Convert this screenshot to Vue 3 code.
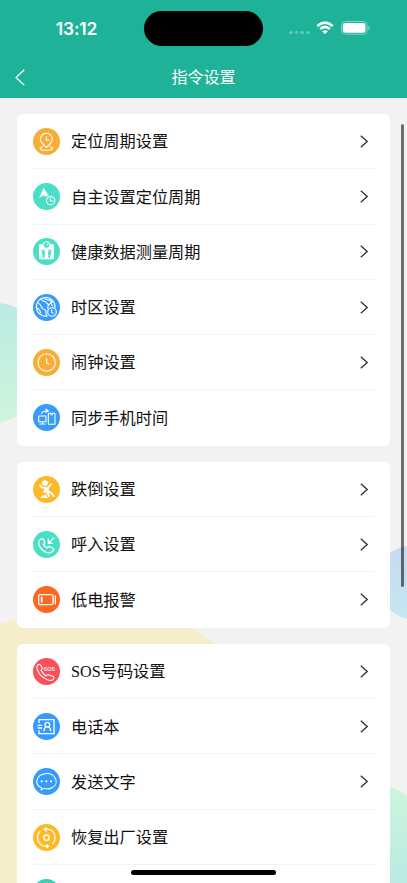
<script setup>
const groups = [
  [
    { icon: 'pin', color: '#f7ad36', label: '定位周期设置', arrow: true },
    { icon: 'navigate', color: '#48dfc5', label: '自主设置定位周期', arrow: true },
    { icon: 'scale', color: '#48dfc5', label: '健康数据测量周期', arrow: true },
    { icon: 'globe', color: '#369bfb', label: '时区设置', arrow: true },
    { icon: 'clock', color: '#f7ad36', label: '闹钟设置', arrow: true },
    { icon: 'sync', color: '#369bfb', label: '同步手机时间', arrow: false }
  ],
  [
    { icon: 'fall', color: '#feb92b', label: '跌倒设置', arrow: true },
    { icon: 'incoming', color: '#48dfc5', label: '呼入设置', arrow: true },
    { icon: 'battery', color: '#ff661f', label: '低电报警', arrow: true }
  ],
  [
    { icon: 'sos', color: '#fb5059', label: 'SOS号码设置', arrow: true },
    { icon: 'contacts', color: '#369bfb', label: '电话本', arrow: true },
    { icon: 'message', color: '#369bfb', label: '发送文字', arrow: true },
    { icon: 'reset', color: '#feb92b', label: '恢复出厂设置', arrow: false },
    { icon: 'more', color: '#33d3b0', label: '', arrow: false }
  ]
]
</script>

<template>
  <div class="screen">
    <svg class="backdrop" viewBox="0 0 407 883">
      <defs>
        <linearGradient id="mint" x1="0" y1="0" x2="0" y2="1">
          <stop offset="0" stop-color="#b9ebe3" />
          <stop offset="1" stop-color="#cff5dc" />
        </linearGradient>
        <linearGradient id="sky" x1="0" y1="0" x2="0" y2="1">
          <stop offset="0" stop-color="#c7daf0" />
          <stop offset="1" stop-color="#c5e7f1" />
        </linearGradient>
        <linearGradient id="leaf" x1="0" y1="0" x2="0" y2="1">
          <stop offset="0" stop-color="#cff5dc" />
          <stop offset="1" stop-color="#b9ebe3" />
        </linearGradient>
      </defs>
      <path d="M0 303Q9 304 17 308L50 340L17 416Q9 421 0 423Z" fill="url(#mint)" />
      <path d="M0 624Q35 612 90 612Q160 615 190 628Q202 634 214 643L240 665V883H0Z" fill="#f6edca" />
      <path d="M380 563Q390 549 407 546V619Q397 616 390 610L380 600Z" fill="url(#sky)" />
      <path d="M380 782L390 786Q399 790 407 796V883H380Z" fill="url(#leaf)" />
    </svg>

    <header class="header">
      <div class="status">
        <span class="time">13:12</span>
        <span class="island"></span>
        <div class="signals">
          <span class="cell"><i></i><i></i><i></i><i></i></span>
          <svg class="wifi" viewBox="0 0 54 42">
            <path d="M4 15Q27-5 50 15M12.500 24Q27 11 41.500 24" fill="none" stroke="#fff" stroke-width="7.500" />
            <path d="M18.500 31Q27 24 35.500 31L27 40Z" fill="#fff" />
          </svg>
          <svg class="power" viewBox="0 0 87 42">
            <rect x="1.500" y="1.500" width="77" height="38" rx="12" fill="none" stroke="#fff" stroke-opacity=".45" stroke-width="3" />
            <rect x="5.500" y="6" width="68" height="29" rx="8" fill="#fff" />
            <path d="M82 14Q86 16 86 21T82 28Z" fill="#fff" fill-opacity=".5" />
          </svg>
        </div>
      </div>
      <div class="navbar">
        <svg class="back" viewBox="0 0 10 17"><path d="M9.300 .7L1 8.500L9.300 16.300" /></svg>
        <h1>指令设置</h1>
        <span class="nav-space"></span>
      </div>
    </header>

    <main class="content">
      <section v-for="(group, index) in groups" :key="index" class="card">
        <div v-for="item in group" :key="item.icon" class="row">
          <svg class="icon" viewBox="0 0 81 81">
            <circle cx="40.500" cy="40.500" r="40.500" :fill="item.color" />
            <g v-if="item.icon === 'pin'" class="line">
              <path d="M40 59C35 52 22 45 22 34A18 18 0 0 1 58 34C58 45 45 52 40 59Z" />
              <path d="M40 26V37H49" />
              <path d="M29 56C16 59 19 67 40 67S64 59 51 56" />
            </g>
            <g v-else-if="item.icon === 'navigate'" class="line">
              <path d="M32 14L48 40Q42 38 39 42L32 37L18 46Z" class="solid" />
              <circle cx="53" cy="53" r="12.500" /><path d="M52 46V54H60" />
            </g>
            <g v-else-if="item.icon === 'scale'">
              <rect x="18" y="19" width="45" height="45" rx="3" fill="#fff" />
              <circle cx="40.500" cy="21" r="10" :fill="item.color" stroke="#fff" stroke-width="3" />
              <path d="M41 23L45 16" stroke="#fff" stroke-width="3" />
              <g :fill="item.color">
                <path d="M25 37Q34 31 36 39C38 45 34 47 35 53Q36 59 32 60Q27 60 29 54C29 48 24 45 25 37Z" />
                <path d="M56 37Q47 31 45 39C43 45 47 47 46 53Q45 59 49 60Q54 60 52 54C52 48 57 45 56 37Z" />
              </g>
              <path d="M25 41Q31 36 36 42M45 42Q50 36 56 41" fill="none" stroke="#fff" stroke-width="1.500" />
            </g>
            <g v-else-if="item.icon === 'globe'" class="line">
              <path d="M43 66A28 28 0 1 1 66 41" />
              <path d="M15 27Q22 29 25 38T38 48L40 65M12 42Q20 44 23 57M25 16Q29 23 36 22L46 32L44 43M35 13Q43 20 51 18Q58 23 51 28L47 34M59 21L54 28L59 36" />
              <circle cx="57" cy="54" r="13" /><path d="M56 47V55L61 58" />
            </g>
            <g v-else-if="item.icon === 'clock'" class="line">
              <circle cx="41" cy="40.500" r="26" /><path d="M41 28V42L48 46" />
            </g>
            <g v-else-if="item.icon === 'sync'" class="line">
              <rect x="17" y="36" width="22" height="17" /><path d="M28 53V60M20 60H37" />
              <rect x="46" y="28" width="20" height="33" rx="2" /><path d="M53 32H59" />
              <path d="M26 28Q28 21 42 21" /><path d="M38 13L49 21L38 28Z" class="solid" />
            </g>
            <g v-else-if="item.icon === 'fall'">
              <circle cx="36" cy="21" r="8.500" fill="#fff" />
              <path d="M36 35L26 34L21 28M43 37L54 25M44 46L54 50L62 60M43 49L48 61" fill="none" stroke="#fff" stroke-width="5.500" stroke-linecap="round" stroke-linejoin="round" />
              <path d="M33 32L48 37L47 47L44 51L29 49L34 41Z" fill="#fff" />
              <path d="M22 66L29 57L33 60L37 54L45 66Z" fill="#fff" />
            </g>
            <g v-else-if="item.icon === 'incoming'" class="line bold">
              <path d="M24 24Q29 21 32 27L35 34Q36 38 31 40Q34 47 43 51Q46 45 50 47L59 51Q64 54 60 60Q53 68 40 64C26 59 17 45 17 35Q17 27 24 24Z" />
              <path d="M62 21L47 36M46 24V37H59" />
            </g>
            <g v-else-if="item.icon === 'battery'" class="line bold">
              <rect x="17" y="26" width="43" height="30" rx="4" /><path d="M26 34V48" stroke-width="5" /><path d="M67 30V53" />
            </g>
            <g v-else-if="item.icon === 'sos'" class="line">
              <path d="M15 20Q20 17 24 23L28 31Q28 34 24 36Q29 47 39 54Q44 48 48 51L59 55Q65 58 61 64Q54 70 43 65C27 59 16 46 12 32Q10 24 15 20Z" />
              <text x="32" y="39" class="sos-text" textLength="34" lengthAdjust="spacingAndGlyphs">SOS</text>
            </g>
            <g v-else-if="item.icon === 'contacts'" class="line bold">
              <path d="M18 29V20H63V62H18V53M15 37H26M15 45H26" />
              <circle cx="43" cy="35" r="7" /><path d="M33 53Q33 44 40 42M46 42Q53 44 53 53" />
            </g>
            <g v-else-if="item.icon === 'message'" class="line">
              <path d="M21 57C5 47 9 21 36 17C69 14 81 48 57 59Q46 65 34 61L24 66L26 59Q23 59 21 57Z" />
              <g fill="#fff" stroke="none"><circle cx="26" cy="40" r="3.200" /><circle cx="40" cy="40" r="3.200" /><circle cx="54" cy="40" r="3.200" /></g>
            </g>
            <g v-else-if="item.icon === 'reset'" class="line bold">
              <path d="M32 66A27 27 0 0 1 21 22M38 16Q52 14 60 23A27 27 0 0 1 59 59M42 67H34" />
              <path d="M41 9L30 16L41 24ZM40 59L50 67L40 74Z" class="solid" />
              <circle cx="40.500" cy="41" r="8" />
            </g>
            <g v-else class="line"><circle cx="40.500" cy="41" r="28" /></g>
          </svg>
          <span class="label">{{ item.label }}</span>
          <svg v-if="item.arrow" class="arrow" viewBox="0 0 8 13"><path d="M.8 .8L7.200 6.500L.8 12.200" /></svg>
        </div>
      </section>
    </main>

    <span class="scrollbar"></span>
    <span class="home"></span>
  </div>
</template>

<style>
body {
  overflow: hidden;
}
</style>

<style scoped>
.screen {
  position: relative;
  width: 407px;
  height: 883px;
  overflow: hidden;
  background: #f2f2f2;
  font-family: "Liberation Serif", "Noto Sans CJK SC", serif;
}
.backdrop {
  position: absolute;
  inset: 0;
  width: 407px;
  height: 883px;
}
.header {
  position: relative;
  height: 97.700px;
  background: #1eb299;
  color: #fff;
}
.status {
  display: grid;
  grid-template-columns: 144px 119px 1fr;
  align-items: center;
  height: 56px;
}
.time {
  padding: 1px 0 0 9px;
  text-align: center;
  font: 600 17.400px/20px Inter, sans-serif;
  letter-spacing: -0.100px;
}
.island {
  height: 35px;
  border-radius: 18px;
  background: #000;
}
.signals {
  display: flex;
  align-items: center;
  padding-left: 26px;
}
.cell {
  display: flex;
  gap: 2px;
  padding-top: 9px;
  margin-right: 6.500px;
}
.cell i {
  width: 3.700px;
  height: 3.700px;
  border-radius: 50%;
  background: rgba(255, 255, 255, 0.3);
}
.wifi {
  width: 18px;
  height: 14px;
  margin-right: 7px;
}
.power {
  width: 29px;
  height: 14px;
}
.navbar {
  display: grid;
  grid-template-columns: 40px 1fr 40px;
  align-items: center;
  height: 42px;
}
.back {
  width: 10px;
  height: 17px;
  margin-left: 15px;
  fill: none;
  stroke: #fff;
  stroke-width: 1.200;
}
h1 {
  margin: 0;
  padding-top: 1px;
  text-align: center;
  font-size: 16px;
  font-weight: 400;
  line-height: 24px;
}
.content {
  position: relative;
  display: flex;
  flex-direction: column;
  gap: 16.300px;
  padding: 16.400px 17px 0;
}
.card {
  border-radius: 6px;
  background: #fff;
  padding: 0 16px;
}
.row {
  display: flex;
  align-items: center;
  height: 55.250px;
  padding-bottom: 0.600px;
  box-sizing: border-box;
  box-shadow: inset 0 -1px #f3f3f3;
}
.row:last-child {
  box-shadow: none;
}
.icon {
  width: 27px;
  height: 27px;
  flex: none;
}
.label {
  flex: 1;
  padding-top: 2px;
  margin-left: 11px;
  color: #111;
  font-size: 16.200px;
  line-height: 24px;
  white-space: nowrap;
}
.arrow {
  width: 8px;
  height: 13px;
  margin-right: 6px;
  fill: none;
  stroke: #333;
  stroke-width: 1.300;
}
.line {
  fill: none;
  stroke: #fff;
  stroke-width: 3.200;
  stroke-linecap: round;
  stroke-linejoin: round;
}
.bold {
  stroke-width: 3.900;
}
.solid {
  fill: #fff;
  stroke: none;
}
.sos-text {
  fill: #fff;
  stroke: none;
  font: 600 15px Inter, sans-serif;
}
.scrollbar {
  position: absolute;
  top: 124px;
  right: 3px;
  width: 3px;
  height: 463px;
  border-radius: 2px;
  background: rgba(0, 0, 0, 0.55);
}
.home {
  position: absolute;
  bottom: 8px;
  left: 131px;
  width: 145px;
  height: 5px;
  border-radius: 3px;
  background: #000;
}
</style>
